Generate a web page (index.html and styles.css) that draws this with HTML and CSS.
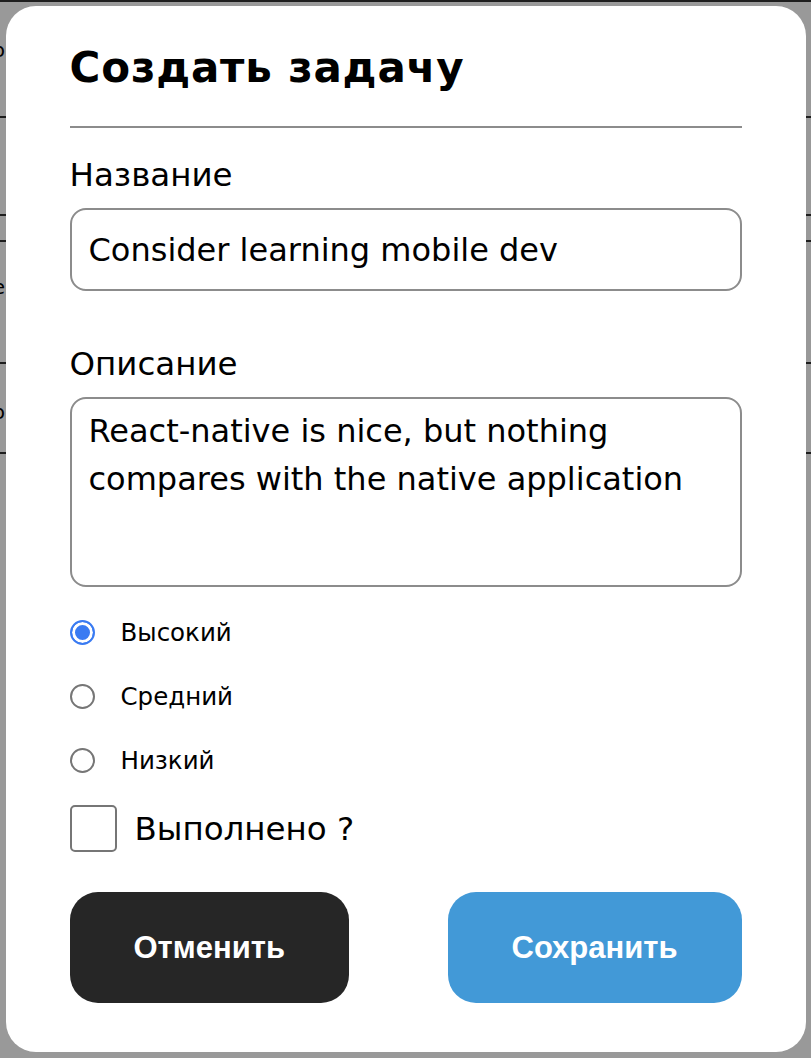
FILE: index.html
```html
<!DOCTYPE html>
<html lang="ru">
<head>
<meta charset="utf-8">
<title>Создать задачу</title>
<link rel="stylesheet" href="styles.css">
</head>
<body>
<div class="page">
  <div class="table">
    <div class="row row-a"><div class="peek peek-a"><span>Задачи по</span></div></div>
    <div class="row row-b"></div>
    <div class="row row-c"></div>
    <div class="row row-d"><div class="peek peek-d"><span>Название</span></div></div>
    <div class="row row-e"><div class="peek peek-e"><span>Низко</span></div></div>
  </div>
</div>

<div class="overlay">
  <form class="modal">
    <h1 class="modal-title">Создать задачу</h1>

    <div class="field field-first">
      <label class="field-label" for="task-title">Название</label>
      <input class="field-input" id="task-title" type="text" value="Consider learning mobile dev">
    </div>

    <div class="field field-second">
      <label class="field-label" for="task-desc">Описание</label>
      <textarea class="field-input field-textarea" id="task-desc">React-native is nice, but nothing compares with the native application</textarea>
    </div>

    <div class="priority">
      <label class="option"><input class="radio" type="radio" name="priority" checked><span>Высокий</span></label>
      <label class="option"><input class="radio" type="radio" name="priority"><span>Средний</span></label>
      <label class="option"><input class="radio" type="radio" name="priority"><span>Низкий</span></label>
    </div>

    <label class="done"><input class="checkbox" type="checkbox"><span>Выполнено ?</span></label>

    <div class="actions">
      <button type="button" class="btn btn-cancel">Отменить</button>
      <button type="submit" class="btn btn-save">Сохранить</button>
    </div>
  </form>
</div>
</body>
</html>
```

FILE: styles.css
```css
* {
  box-sizing: border-box;
}

html,
body {
  margin: 0;
  height: 100%;
}

body {
  font-family: "DejaVu Sans", "Noto Sans", sans-serif;
  color: #000;
  background: #fff;
  overflow: hidden;
}

/* background page (table behind the modal) */
.table {
  border-top: 2px solid #333;
}

.row {
  display: flex;
  align-items: center;
  border-bottom: 2px solid #333;
}

.row-a { height: 116px; }
.row-b { height: 98px; }
.row-c { height: 26px; }
.row-d { height: 122px; }
.row-e { height: 90px; }

.peek {
  width: 5px;
  display: flex;
  justify-content: flex-end;
  white-space: nowrap;
  font-size: 20px;
}

.peek-a { margin-bottom: 18px; }
.peek-d { margin-bottom: 30px; }
.peek-e { margin-top: 8px; }

/* overlay + modal */
.overlay {
  position: fixed;
  inset: 0;
  background: rgba(0, 0, 0, 0.4);
  display: flex;
  align-items: center;
  justify-content: center;
}

.modal {
  width: 800px;
  background: #fff;
  border-radius: 30px;
  padding: 38px 64px 49px;
  display: flex;
  flex-direction: column;
}

.modal-title {
  margin: 0;
  font-size: 42px;
  line-height: 48px;
  font-weight: 700;
  letter-spacing: 0.85px;
  padding-bottom: 34px;
  border-bottom: 2px solid #8c8c8c;
}

.field {
  display: flex;
  flex-direction: column;
  gap: 13px;
}

.field-first { margin-top: 27px; }
.field-second { margin-top: 53px; }

.field-label {
  font-size: 32.5px;
  line-height: 40px;
}

.field-input {
  display: block;
  width: 100%;
  height: 83px;
  margin: 0;
  padding: 0 17px;
  border: 2px solid #8c8c8c;
  border-radius: 16px;
  background: #fff;
  color: #000;
  font-family: inherit;
  font-size: 32px;
  outline: none;
}

.field-textarea {
  height: 190px;
  padding: 8px 17px;
  line-height: 48px;
  resize: none;
  overflow: hidden;
}

.priority {
  margin-top: 25px;
  display: flex;
  flex-direction: column;
  gap: 24px;
}

.option {
  display: flex;
  align-items: center;
  gap: 26px;
  height: 40px;
  font-size: 24.5px;
}

.radio {
  appearance: none;
  -webkit-appearance: none;
  margin: 0;
  width: 25px;
  height: 25px;
  border: 2px solid #767676;
  border-radius: 50%;
  background: #fff;
  flex: none;
}

.radio:checked {
  border-color: #3a7bf2;
  background: #3a7bf2;
  box-shadow: inset 0 0 0 3px #fff;
}

.done {
  margin-top: 25px;
  display: flex;
  align-items: center;
  gap: 18px;
  font-size: 32.5px;
}

.checkbox {
  appearance: none;
  -webkit-appearance: none;
  margin: 0;
  width: 47px;
  height: 47px;
  border: 2px solid #767676;
  border-radius: 5px;
  background: #fff;
  flex: none;
}

.actions {
  margin-top: 40px;
  display: flex;
  justify-content: space-between;
}

.btn {
  height: 111px;
  padding: 0 64px;
  border: none;
  border-radius: 28px;
  font-family: "Liberation Sans", Arial, sans-serif;
  font-weight: 700;
  font-size: 31px;
  color: #fff;
  cursor: pointer;
}

.btn-cancel {
  background: #262626;
}

.btn-save {
  background: #4299d7;
}
```
